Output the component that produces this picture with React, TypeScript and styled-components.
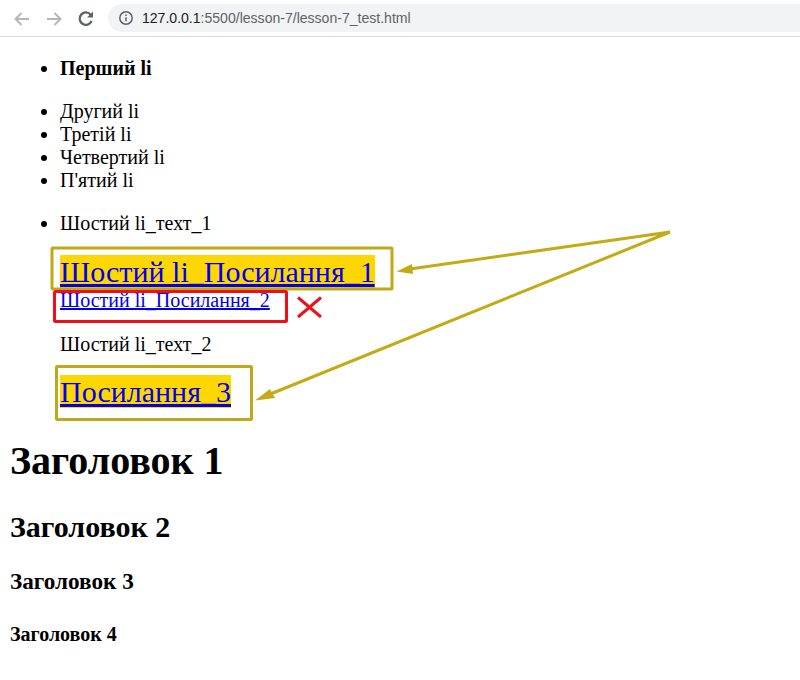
import React from "react";
import styled, { createGlobalStyle } from "styled-components";

const Global = createGlobalStyle`
  html, body { margin: 0; padding: 0; background: #fff; }
  body { font-family: "Liberation Serif", "Times New Roman", serif; color: #000; }
`;

const Page = styled.div`
  position: relative;
  width: 800px;
  height: 680px;
  overflow: hidden;
`;

const Toolbar = styled.header`
  display: flex;
  align-items: center;
  height: 36px;
  border-bottom: 1px solid #d9dadc;
  padding: 0 0 0 12px;
  box-sizing: content-box;
`;

const NavIcon = styled.svg`
  flex: none;
  width: 20px;
  height: 20px;
  margin-right: 12px;
`;

const Omnibox = styled.div`
  display: flex;
  align-items: center;
  flex: 1;
  height: 28px;
  padding-left: 10px;
  border-radius: 14px 0 0 14px;
  background: #f1f3f4;
  font-family: "Liberation Sans", Arial, sans-serif;
  font-size: 14.05px;
  color: #5f6368;
`;

const InfoIcon = styled.svg`
  flex: none;
  width: 16px;
  height: 16px;
  margin-right: 8px;
`;

const Host = styled.span`
  color: #202124;
`;

const Content = styled.main`
  padding: 0 10px;
  font-size: 20px;
  line-height: 23px;
`;

const List = styled.ul`
  margin: 0;
  padding: 20px 0 0 50px;
  list-style: disc;
`;

const Para = styled.p`
  margin: 0;
  padding: 0 0 20px;
`;

const Item = styled.li``;

const BigLink = styled.a`
  display: inline-block;
  font-size: 30px;
  line-height: 33px;
  background: #ffd700;
  color: #0000ee;
  text-decoration: underline;
`;

const SmallLink = styled.a`
  color: #0000ee;
  text-decoration: underline;
`;

const LinkRow = styled.div<{ $top: number; $bottom: number }>`
  margin-top: ${(p) => p.$top}px;
  margin-bottom: ${(p) => p.$bottom}px;
`;

const Heading1 = styled.h1`
  margin: 30px 0 0;
  font-size: 40px;
  line-height: 46px;
`;
const Heading2 = styled.h2`
  margin: 26px 0 0;
  font-size: 30px;
  line-height: 34px;
`;
const Heading3 = styled.h3`
  margin: 24px 0 0;
  font-size: 23.2px;
  line-height: 27px;
`;
const Heading4 = styled.h4`
  margin: 28px 0 0;
  font-size: 20px;
  line-height: 23px;
`;

const Overlay = styled.svg`
  position: absolute;
  left: 0;
  top: 0;
  width: 800px;
  height: 680px;
  pointer-events: none;
`;

export default function App() {
  return (
    <Page>
      <Global />
      <Toolbar>
        <NavIcon viewBox="0 0 20 20" fill="none" stroke="#b4b6b9" strokeWidth="2">
          <path d="M17 11H4M9.5 5 3.5 11l6 6" />
        </NavIcon>
        <NavIcon viewBox="0 0 20 20" fill="none" stroke="#b4b6b9" strokeWidth="2">
          <path d="M3 11h13M10.5 5l6 6-6 6" />
        </NavIcon>
        <NavIcon viewBox="0 0 20 20" fill="none" stroke="#5f6368" strokeWidth="2.3">
          <path d="M15.6 13a6.2 6.2 0 1 1-.7-6" />
          <path d="M17 3.5v6h-6z" fill="#5f6368" stroke="none" />
        </NavIcon>
        <Omnibox>
          <InfoIcon viewBox="0 0 16 16" fill="none" stroke="#5f6368" strokeWidth="1.5">
            <circle cx="8" cy="8" r="6.2" />
            <path d="M8 7.2v4M8 4.6v1.5" />
          </InfoIcon>
          <span>
            <Host>127.0.0.1</Host>:5500/lesson-7/lesson-7_test.html
          </span>
        </Omnibox>
      </Toolbar>
      <Content>
        <List>
          <Item>
            <Para>
              <b>Перший li</b>
            </Para>
          </Item>
          <Item>Другий li</Item>
          <Item>Третій li</Item>
          <Item>Четвертий li</Item>
          <Item>
            <Para>П'ятий li</Para>
          </Item>
          <Item>
            Шостий li_техт_1
            <LinkRow $top={20} $bottom={0}>
              <BigLink href="#">Шостий li_Посилання_1</BigLink>
            </LinkRow>
            <LinkRow $top={1} $bottom={21}>
              <SmallLink href="#">Шостий li_Посилання_2</SmallLink>
            </LinkRow>
            Шостий li_техт_2
            <LinkRow $top={19} $bottom={0}>
              <BigLink href="#">Посилання_3</BigLink>
            </LinkRow>
          </Item>
        </List>
        <Heading1>Заголовок 1</Heading1>
        <Heading2>Заголовок 2</Heading2>
        <Heading3>Заголовок 3</Heading3>
        <Heading4>Заголовок 4</Heading4>
      </Content>
      <Overlay viewBox="0 0 800 680" fill="none">
        <rect x="52" y="248" width="340" height="41" stroke="#c0a816" strokeWidth="3" rx="1" />
        <rect x="54.5" y="291.5" width="232" height="30" stroke="#ee0f1a" strokeWidth="3" rx="1" />
        <rect x="56.5" y="366.5" width="195" height="53" stroke="#c0a816" strokeWidth="3" rx="1" />
        <path d="M298 297.5 321 317M321 297.5 298 317" stroke="#e8141c" strokeWidth="3" />
        <path d="M670 232 410 269M670 232 268 395" stroke="#c4aa14" strokeWidth="3" />
        <path d="M396.5 271.5 412 264 413 274z" fill="#c4aa14" />
        <path d="M255 400.5 270 389 275 398z" fill="#c4aa14" />
      </Overlay>
    </Page>
  );
}
